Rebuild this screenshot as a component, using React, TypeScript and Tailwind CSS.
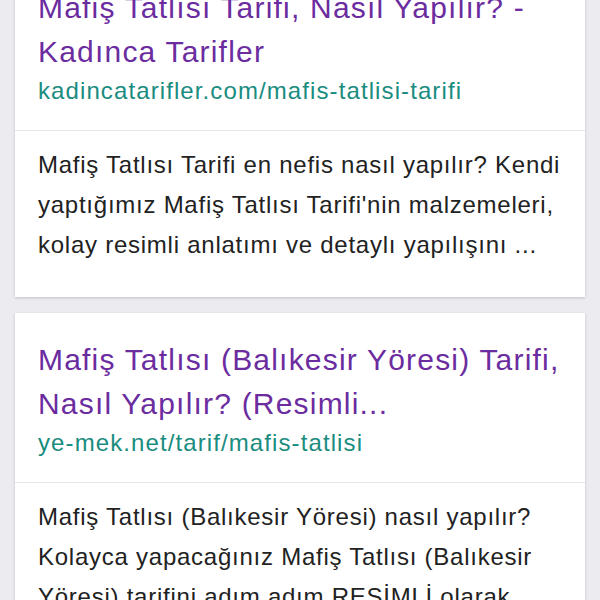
import React from 'react';

interface ResultProps {
  title: string[]
  url: string
  snippet: string[]
}

const results: ResultProps[] = [
  {
    title: ['Mafiş Tatlısı Tarifi, Nasıl Yapılır? -', 'Kadınca Tarifler'],
    url: 'kadincatarifler.com/mafis-tatlisi-tarifi',
    snippet: [
      'Mafiş Tatlısı Tarifi en nefis nasıl yapılır? Kendi',
      "yaptığımız Mafiş Tatlısı Tarifi'nin malzemeleri,",
      'kolay resimli anlatımı ve detaylı yapılışını ...',
    ],
  },
  {
    title: ['Mafiş Tatlısı (Balıkesir Yöresi) Tarifi,', 'Nasıl Yapılır? (Resimli...'],
    url: 'ye-mek.net/tarif/mafis-tatlisi',
    snippet: [
      'Mafiş Tatlısı (Balıkesir Yöresi) nasıl yapılır?',
      'Kolayca yapacağınız Mafiş Tatlısı (Balıkesir',
      'Yöresi) tarifini adım adım RESİMLİ olarak...',
    ],
  },
];

function ResultCard({ title, url, snippet }: ResultProps) {
  return (
    <div className="flex flex-col divide-y divide-[#e6e6ea] bg-white shadow-[0_1px_3px_rgba(0,0,0,0.18)]">
      <div className="px-[23px] pt-[25px] pb-[22px]">
        <div className="text-[30px] leading-[44px] tracking-[1.2px] text-[#6b2c9f]">
          {title.map((line) => (
            <div key={line} className="whitespace-nowrap">{line}</div>
          ))}
        </div>
        <div className="whitespace-nowrap text-[24px] leading-[34px] tracking-[1.1px] text-[#1a8c80]">{url}</div>
      </div>
      <div className="px-[23px] pt-[14px] pb-[32px] text-[24px] leading-[40px] tracking-[0.75px] text-[#222]">
        {snippet.map((line) => (
          <div key={line} className="whitespace-nowrap">{line}</div>
        ))}
      </div>
    </div>
  );
}

export default function App() {
  return (
    <div
      className="h-[600px] w-[600px] overflow-hidden bg-[#ebebf0]"
      style={{ fontFamily: '"Liberation Sans", Arial, sans-serif' }}
    >
      <div className="-mt-[39px] flex flex-col gap-4 px-[15px]">
        {results.map((r) => (
          <ResultCard key={r.url} {...r} />
        ))}
      </div>
    </div>
  );
}
